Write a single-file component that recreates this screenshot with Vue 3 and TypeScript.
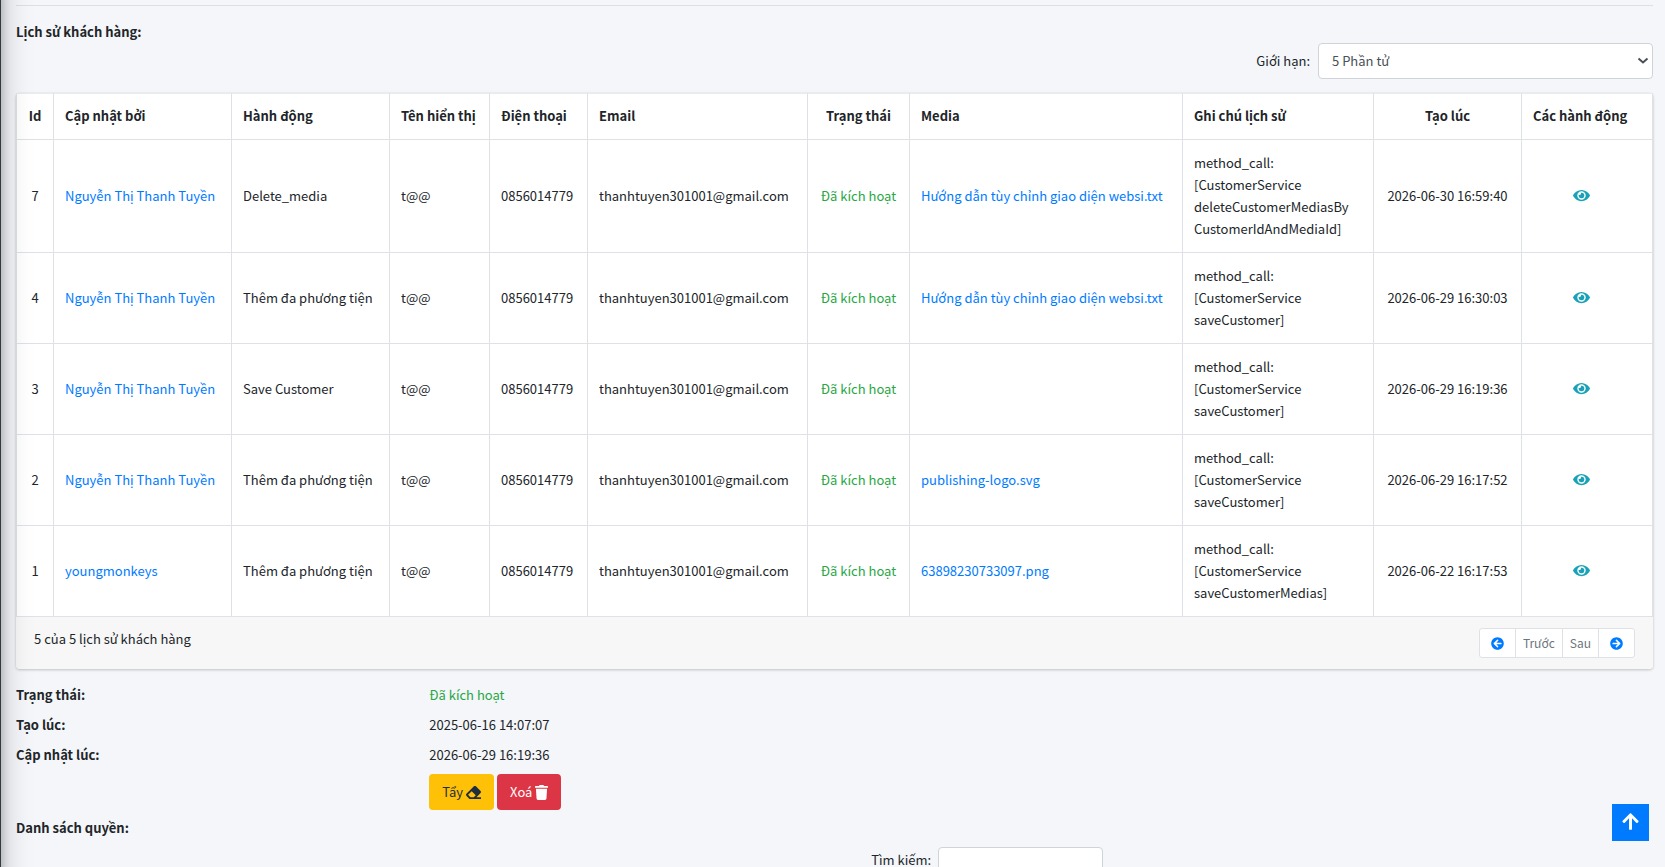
<script setup lang="ts">
import { ref } from 'vue'

interface HistoryRow {
  id: number
  updatedBy: string
  action: string
  media: string
  note: string[]
  createdAt: string
}

const displayName = 't@@'
const phone = '0856014779'
const email = 'thanhtuyen301001@gmail.com'
const statusText = 'Đã kích hoạt'
const limit = ref('5')
const keyword = ref('')

const rows: HistoryRow[] = [
  { id: 7, updatedBy: 'Nguyễn Thị Thanh Tuyền', action: 'Delete_media', media: 'Hướng dẫn tùy chỉnh giao diện websi.txt', note: ['method_call:', '[CustomerService', 'deleteCustomerMediasBy', 'CustomerIdAndMediaId]'], createdAt: '2026-06-30 16:59:40' },
  { id: 4, updatedBy: 'Nguyễn Thị Thanh Tuyền', action: 'Thêm đa phương tiện', media: 'Hướng dẫn tùy chỉnh giao diện websi.txt', note: ['method_call:', '[CustomerService', 'saveCustomer]'], createdAt: '2026-06-29 16:30:03' },
  { id: 3, updatedBy: 'Nguyễn Thị Thanh Tuyền', action: 'Save Customer', media: '', note: ['method_call:', '[CustomerService', 'saveCustomer]'], createdAt: '2026-06-29 16:19:36' },
  { id: 2, updatedBy: 'Nguyễn Thị Thanh Tuyền', action: 'Thêm đa phương tiện', media: 'publishing-logo.svg', note: ['method_call:', '[CustomerService', 'saveCustomer]'], createdAt: '2026-06-29 16:17:52' },
  { id: 1, updatedBy: 'youngmonkeys', action: 'Thêm đa phương tiện', media: '63898230733097.png', note: ['method_call:', '[CustomerService', 'saveCustomerMedias]'], createdAt: '2026-06-22 16:17:53' },
]

const arrowCircle =
  'M256 504C119 504 8 393 8 256S119 8 256 8s248 111 248 248-111 248-248 248zm28.9-143.6L209.4 288H392c13.3 0 24-10.7 24-24v-16c0-13.3-10.7-24-24-24H209.4l75.5-72.4c9.7-9.3 9.9-24.8.4-34.3l-11-10.9c-9.4-9.4-24.6-9.4-33.9 0L107.7 239c-9.4 9.4-9.4 24.6 0 33.9l132.7 132.7c9.4 9.4 24.6 9.4 33.9 0l11-10.9c9.5-9.5 9.3-25-.4-34.3z'
</script>

<template>
  <div class="page">
    <aside class="sidebar"></aside>
    <main class="content">
      <hr class="divider" />
      <h2 class="heading">Lịch sử khách hàng:</h2>

      <div class="limit">
        <label for="limit">Giới hạn:</label>
        <div class="select-wrap">
          <select id="limit" v-model="limit" class="control">
            <option value="5">5 Phần tử</option>
            <option value="10">10 Phần tử</option>
          </select>
          <svg class="chevron" viewBox="0 0 12 8" aria-hidden="true">
            <path d="M1.5 1.5 6 5.5l4.500-4" />
          </svg>
        </div>
      </div>

      <section class="card">
        <table class="history">
          <colgroup>
            <col class="c-id" />
            <col class="c-user" />
            <col class="c-action" />
            <col class="c-name" />
            <col class="c-phone" />
            <col class="c-email" />
            <col class="c-status" />
            <col class="c-media" />
            <col class="c-note" />
            <col class="c-created" />
            <col />
          </colgroup>
          <thead>
            <tr>
              <th class="center">Id</th>
              <th>Cập nhật bởi</th>
              <th>Hành động</th>
              <th>Tên hiển thị</th>
              <th>Điện thoại</th>
              <th>Email</th>
              <th class="center">Trạng thái</th>
              <th>Media</th>
              <th>Ghi chú lịch sử</th>
              <th class="center">Tạo lúc</th>
              <th>Các hành động</th>
            </tr>
          </thead>
          <tbody>
            <tr v-for="row in rows" :key="row.id">
              <td class="center">{{ row.id }}</td>
              <td><a href="#">{{ row.updatedBy }}</a></td>
              <td>{{ row.action }}</td>
              <td>{{ displayName }}</td>
              <td>{{ phone }}</td>
              <td>{{ email }}</td>
              <td class="center active">{{ statusText }}</td>
              <td><a v-if="row.media" href="#">{{ row.media }}</a></td>
              <td><span v-for="line in row.note" :key="line" class="line">{{ line }}</span></td>
              <td class="center">{{ row.createdAt }}</td>
              <td class="view-cell">
                <a href="#" class="view" aria-label="Xem">
                  <svg viewBox="0 0 576 512" aria-hidden="true">
                    <path d="M572.52 241.4C518.29 135.59 410.93 64 288 64S57.68 135.64 3.48 241.41a32.35 32.35 0 0 0 0 29.19C57.71 376.41 165.07 448 288 448s230.32-71.64 284.52-177.41a32.35 32.35 0 0 0 0-29.19zM288 400a144 144 0 1 1 144-144 143.93 143.93 0 0 1-144 144zm0-240a95.31 95.31 0 0 0-25.31 3.79 47.85 47.85 0 0 1-66.9 66.9A95.78 95.78 0 1 0 288 160z" />
                  </svg>
                </a>
              </td>
            </tr>
          </tbody>
        </table>
        <footer class="card-footer">
          <span>5 của 5 lịch sử khách hàng</span>
          <nav class="pager">
            <a href="#" class="icon-page" aria-label="Trang đầu">
              <svg viewBox="0 0 512 512" aria-hidden="true"><path :d="arrowCircle" /></svg>
            </a>
            <a href="#" class="muted">Trước</a>
            <a href="#" class="muted">Sau</a>
            <a href="#" class="icon-page" aria-label="Trang cuối">
              <svg class="flip" viewBox="0 0 512 512" aria-hidden="true"><path :d="arrowCircle" /></svg>
            </a>
          </nav>
        </footer>
      </section>

      <dl class="details">
        <dt>Trạng thái:</dt>
        <dd class="active">{{ statusText }}</dd>
        <dt>Tạo lúc:</dt>
        <dd>2025-06-16 14:07:07</dd>
        <dt>Cập nhật lúc:</dt>
        <dd>2026-06-29 16:19:36</dd>
      </dl>
      <div class="buttons">
        <button type="button" class="btn warning">
          Tẩy
          <svg class="eraser" viewBox="0 0 512 512" aria-hidden="true">
            <path d="M497.941 273.941c18.745-18.745 18.745-49.137 0-67.882l-160-160c-18.745-18.745-49.136-18.746-67.883 0l-256 256c-18.745 18.745-18.745 49.137 0 67.882l96 96A48.004 48.004 0 0 0 144 480h356c6.627 0 12-5.373 12-12v-40c0-6.627-5.373-12-12-12H355.883l142.058-142.059zm-302.627-62.627l137.373 137.373L265.373 416H150.628l-80-80 124.686-124.686z" />
          </svg>
        </button>
        <button type="button" class="btn danger">
          Xoá
          <svg class="trash" viewBox="0 0 448 512" aria-hidden="true">
            <path d="M432 32H312l-9.4-18.7A24 24 0 0 0 281.1 0H166.8a23.72 23.72 0 0 0-21.4 13.3L136 32H16A16 16 0 0 0 0 48v32a16 16 0 0 0 16 16h416a16 16 0 0 0 16-16V48a16 16 0 0 0-16-16zM53.2 467a48 48 0 0 0 47.9 45h245.8a48 48 0 0 0 47.9-45L416 128H32z" />
          </svg>
        </button>
      </div>

      <h2 class="heading">Danh sách quyền:</h2>
      <div class="search">
        <label for="search">Tìm kiếm:</label>
        <input id="search" v-model="keyword" type="search" class="control" />
      </div>
    </main>

    <a href="#" class="to-top" aria-label="Lên đầu trang">
      <svg viewBox="0 0 448 512" aria-hidden="true">
        <path d="M34.9 289.5l-22.2-22.2c-9.4-9.4-9.4-24.6 0-33.9L207 39c9.4-9.4 24.6-9.4 33.9 0l194.3 194.3c9.4 9.4 9.4 24.6 0 33.9L413 289.4c-9.5 9.5-25 9.3-34.3-.4L264 168.6V456c0 13.3-10.7 24-24 24h-32c-13.3 0-24-10.7-24-24V168.6L69.2 289.1c-9.3 9.8-24.8 10-34.3.4z" />
      </svg>
    </a>
  </div>
</template>

<style>
html,
body {
  margin: 0;
  background: #f4f6f9;
}
</style>

<style scoped>
*,
*::before,
*::after {
  box-sizing: border-box;
}

.page {
  height: 100vh;
  overflow: hidden;
  background: #f4f6f9;
  color: #212529;
  font-family: 'Noto Sans CJK SC', 'Noto Sans', sans-serif;
  font-size: 13px;
  line-height: 22px;
}

/* Collapsed sidebar: only its right edge and shadow reach the page. */
.sidebar {
  position: fixed;
  top: -40px;
  bottom: -40px;
  left: -249px;
  z-index: 2;
  width: 250px;
  background: #343a40;
  box-shadow: 0 14px 28px rgba(0, 0, 0, 0.25), 0 10px 10px rgba(0, 0, 0, 0.22);
}

.content {
  padding: 5px 12px 0 16px;
}

.divider {
  height: 1px;
  margin: 0 0 15px;
  border: 0;
  background: #dcdfe3;
}

.heading {
  margin: 0;
  font-size: inherit;
  font-weight: 700;
}

.limit {
  display: flex;
  align-items: center;
  justify-content: flex-end;
  gap: 8px;
  margin-bottom: 14px;
}

.select-wrap {
  position: relative;
  width: 335px;
}

.control {
  display: block;
  height: 36px;
  padding: 0 13px;
  border: 1px solid #ced4da;
  border-radius: 4px;
  background: #fff;
  color: #495057;
  font: inherit;
  appearance: none;
}

.select-wrap .control {
  width: 100%;
}

.chevron {
  position: absolute;
  top: 14px;
  right: 4px;
  width: 12px;
  height: 8px;
  fill: none;
  stroke: #495057;
  stroke-width: 2;
  pointer-events: none;
}

.card {
  border-radius: 4px;
  background: #fff;
  box-shadow: 0 0 1px rgba(0, 0, 0, 0.125), 0 1px 3px rgba(0, 0, 0, 0.2);
}

a {
  color: #007bff;
  text-decoration: none;
}

.history {
  width: 100%;
  border-collapse: collapse;
  border: 1px solid #dee2e6;
}

.history th,
.history td {
  padding: 12px 11px;
  border: 1px solid #dee2e6;
  text-align: left;
  vertical-align: middle;
  white-space: nowrap;
}

.history thead th {
  padding-top: 11px;
  border-top-color: #e9ebee;
}

.history .center {
  padding-inline: 0;
  text-align: center;
}

.c-id { width: 37px; }
.c-user { width: 178px; }
.c-action { width: 158px; }
.c-name { width: 100px; }
.c-phone { width: 98px; }
.c-email { width: 220px; }
.c-status { width: 102px; }
.c-media { width: 273px; }
.c-note { width: 191px; }
.c-created { width: 148px; }

.line {
  display: block;
}

.active {
  color: #28a745;
}

.history .view-cell {
  padding-right: 22px;
  text-align: center;
}

.view {
  display: block;
}

.view svg {
  display: block;
  width: 17px;
  height: 15px;
  margin: 0 auto 2px;
  fill: #17a2b8;
}

.card-footer {
  display: flex;
  align-items: flex-start;
  justify-content: space-between;
  padding: 11px 18px;
  border-radius: 0 0 4px 4px;
  background: #f7f7f7;
}

.pager {
  display: flex;
  border: 1px solid #dee2e6;
  border-radius: 3px;
  background: #fff;
}

.pager a {
  display: flex;
  align-items: center;
  justify-content: center;
  height: 28px;
  padding: 0 7px;
  font-size: 12px;
}

.pager a + a {
  border-left: 1px solid #dee2e6;
}

.pager .icon-page {
  padding: 0 11px;
}

.pager .muted {
  color: #6c757d;
}

.pager svg {
  width: 13px;
  height: 13px;
  fill: #007bff;
}

.flip {
  transform: scaleX(-1);
}

.details {
  display: grid;
  grid-template-columns: calc(25% + 4px) 1fr;
  row-gap: 8px;
  margin: 15px 0 8px;
}

.details dt {
  font-weight: 700;
}

.details dd {
  margin: 0;
}

.buttons {
  display: flex;
  gap: 3px;
  margin: 0 0 7px calc(25% + 4px);
}

.btn {
  display: flex;
  align-items: center;
  gap: 3px;
  height: 36px;
  padding: 0 13px;
  border: 0;
  border-radius: 4px;
  font: inherit;
}

.warning {
  background: #ffc107;
  color: #1f2d3d;
}

.danger {
  background: #dc3545;
  color: #fff;
}

.btn svg {
  height: 15px;
  fill: currentColor;
}

.eraser {
  width: 15px;
}

.trash {
  width: 13px;
}

.search {
  display: flex;
  align-items: flex-start;
  gap: 7px;
  margin: 8px 0 0 calc(52% + 4px);
}

.search label {
  padding-top: 2px;
}

.search .control {
  width: 165px;
}

.to-top {
  position: fixed;
  right: 16px;
  bottom: 26px;
  display: flex;
  align-items: center;
  justify-content: center;
  width: 37px;
  height: 37px;
  background: #007bff;
}

.to-top svg {
  width: 17px;
  height: 19px;
  margin-bottom: 3px;
  fill: #fff;
}
</style>
